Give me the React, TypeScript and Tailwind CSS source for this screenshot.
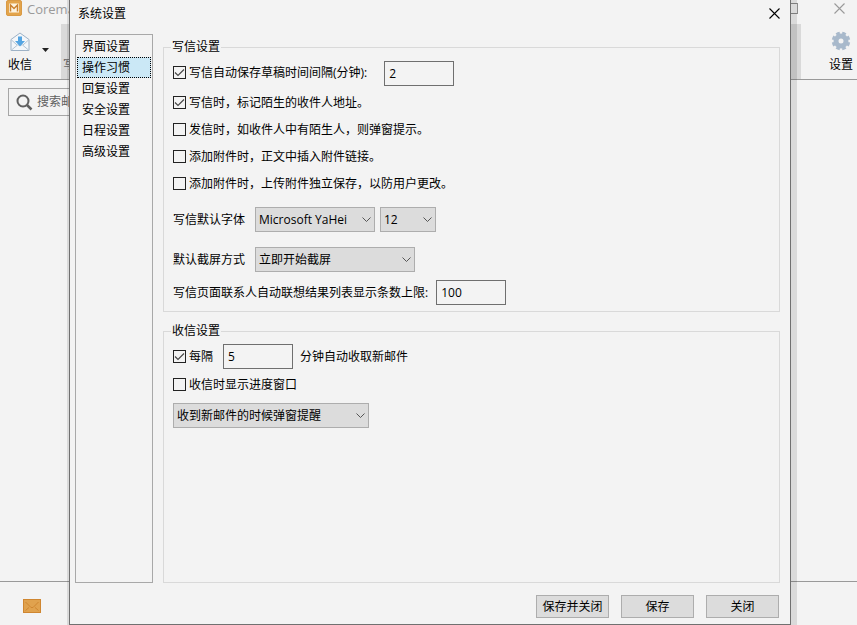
import { useState, type ReactNode } from "react";

const categories = ["界面设置", "操作习惯", "回复设置", "安全设置", "日程设置", "高级设置"];

function CloseIcon({ className }: { className: string }) {
  return (
    <svg viewBox="0 0 11 11" className={className} fill="none" stroke="currentColor" strokeWidth="1.1">
      <path d="M0.5 0.5 10.5 10.5M10.5 0.5 0.5 10.5" />
    </svg>
  );
}

function CheckOption({ label, checked = false }: { label: string; checked?: boolean }) {
  return (
    <label className="flex items-center gap-[3px]">
      <span className="relative flex size-[13px] shrink-0">
        <input
          type="checkbox"
          defaultChecked={checked}
          className="peer size-[13px] appearance-none border border-[#222222] bg-[#f3f3f3]"
        />
        <svg
          viewBox="0 0 13 13"
          className="pointer-events-none absolute inset-0 hidden peer-checked:block"
          fill="none"
          stroke="#444444"
          strokeWidth="1.1"
        >
          <path d="M2 6.5 5 9.5 11 3.5" />
        </svg>
      </span>
      <span>{label}</span>
    </label>
  );
}

function Dropdown({ id, label, width, options }: { id: string; label: string; width: string; options: string[] }) {
  return (
    <span className={`relative flex h-[25px] ${width}`}>
      <select
        id={id}
        aria-label={label}
        className="size-full appearance-none border border-[#adadad] bg-[#dcdcdc] pl-[3px] pr-4 text-black"
      >
        {options.map((o) => (
          <option key={o}>{o}</option>
        ))}
      </select>
      <svg
        viewBox="0 0 9 5"
        className="pointer-events-none absolute right-1 top-[10px] h-[5px] w-[9px]"
        fill="none"
        stroke="#555555"
      >
        <path d="M0.5 0.5 4.5 4.5 8.5 0.5" />
      </svg>
    </span>
  );
}

function NumberBox({ label, value }: { label: string; value: string }) {
  return (
    <input
      type="text"
      aria-label={label}
      defaultValue={value}
      className="h-[25px] w-[70px] border border-[#6f6f6f] bg-[#f3f3f3] px-1"
    />
  );
}

function Group({ title, className, children }: { title: string; className: string; children: ReactNode }) {
  return (
    <fieldset className={`min-w-0 border border-[#d9d9d9] pl-[9px] ${className}`}>
      <legend className="-ml-[2px] px-px leading-5">{title}</legend>
      {children}
    </fieldset>
  );
}

function MainWindow() {
  return (
    <div className="flex min-h-screen flex-col">
      <header className="border-b border-[#999999]">
        <div className="flex h-6 justify-between pl-[6px] pr-3 text-[#9a9a9a]">
          <div className="flex items-start gap-[5px]">
            <svg viewBox="0 0 16 16" className="size-4">
              <rect x="0.5" y="0.5" width="15" height="15" rx="1.5" fill="#e3a44b" stroke="#d99a45" />
              <rect x="3" y="3.5" width="10" height="9" fill="#fdf3e0" />
              <path d="M4.5 11.500V5L8 8.500 11.500 5V11.500" fill="none" stroke="#cb8230" strokeWidth="1.500" />
            </svg>
            <span className="text-[13px] leading-[18px]">Coremail</span>
          </div>
          <div className="flex gap-9 pt-[3px]">
            <span className="size-[11px] border border-[#8c8c8c]" />
            <button aria-label="关闭主窗口" className="flex h-[11px]">
              <CloseIcon className="size-[11px]" />
            </button>
          </div>
        </div>
        <div className="flex h-[55px] items-stretch justify-between">
          <div className="flex">
            <button className="flex w-10 flex-col items-center gap-[5px] pt-2">
              <svg viewBox="0 0 20 20" className="size-5" fill="none">
                <path d="M1 7.500 10 1 19 7.500V18.500H1Z" fill="#f4f7fa" stroke="#9eb2c6" />
                <path d="M1.500 8 7 13M18.500 8 13 13M1.500 18 7.500 13H12.500L18.500 18" stroke="#b4c3d2" />
                <path d="M8 4.500H12V9H15L10 14.500 5 9H8Z" fill="#55a5e2" />
              </svg>
              <span>收信</span>
            </button>
            <svg viewBox="0 0 7 4" className="ml-[2px] mt-6 h-1 w-[7px]">
              <path d="M0 0H7L3.500 4Z" fill="#222222" />
            </svg>
            <button
              aria-label="写信"
              className="ml-3 flex w-10 items-end bg-[#d9d9d9] pb-[6px] pl-[2px] text-[#666666]"
            >
              写
            </button>
          </div>
          <div className="flex">
            <span className="mr-[24px] w-[34px] bg-[#d9d9d9]" />
            <button className="flex w-8 flex-col items-center gap-[6px] pt-[7px]">
              <svg viewBox="0 0 20 20" className="size-5" fill="none">
                <circle cx="10" cy="10" r="5" stroke="#a8b9cb" strokeWidth="5" />
                <circle
                  cx="10"
                  cy="10"
                  r="8"
                  stroke="#a8b9cb"
                  strokeWidth="2.5"
                  pathLength="16"
                  strokeDasharray="1.200 0.800"
                  strokeDashoffset="1.600"
                />
              </svg>
              <span className="whitespace-nowrap">设置</span>
            </button>
          </div>
        </div>
      </header>
      <main className="flex-1 p-2">
        <label className="flex h-7 w-52 items-center gap-1 border border-[#a6a6a6] pl-[7px]">
          <svg viewBox="0 0 17 17" className="size-[17px] shrink-0" fill="none" stroke="#606060" strokeWidth="2">
            <circle cx="7" cy="7" r="5.500" />
            <path d="M11 11 15.500 15.500" strokeWidth="2.500" />
          </svg>
          <input
            type="search"
            aria-label="搜索邮件"
            placeholder="搜索邮件"
            className="w-full min-w-0 bg-transparent placeholder:text-[#606060]"
          />
        </label>
      </main>
      <footer className="flex h-11 items-center border-t border-[#999999] pl-[23px] pt-1">
        <svg viewBox="0 0 18 14" className="h-[14px] w-[18px]">
          <rect x="0.5" y="0.5" width="17" height="13" fill="#e0a24e" stroke="#cf8630" />
          <path d="M2.500 3 8 8.500H10L15.500 3M2.500 11.500 6 8.500M15.500 11.500 12 8.500" fill="none" stroke="#cf8630" />
        </svg>
      </footer>
    </div>
  );
}

export default function App() {
  const [active, setActive] = useState("操作习惯");

  return (
    <div className="relative min-h-screen overflow-hidden bg-[#f3f3f3] font-['Open_Sans','Noto_Sans_CJK_SC',sans-serif] text-xs text-black">
      <MainWindow />
      <div
        role="dialog"
        aria-labelledby="dialog-title"
        className="absolute inset-y-0 left-[69px] right-[66px] flex flex-col border-x border-b border-[#707070] bg-[#f3f3f3] shadow-[2px_0_0_4px_rgba(0,0,0,0.1)]"
      >
        <div className="flex h-[34px] shrink-0 items-start justify-between pl-2 pr-[10px]">
          <h1 id="dialog-title" className="pt-1 leading-5">
            系统设置
          </h1>
          <button aria-label="关闭窗口" className="pt-2">
            <CloseIcon className="size-[11px]" />
          </button>
        </div>
        <div className="flex min-h-0 flex-1 gap-[10px] pl-[5px] pr-[10px]">
          <nav className="w-[78px] shrink-0 border border-[#a8a8a8] p-px">
            {categories.map((c) => (
              <button
                key={c}
                onClick={() => setActive(c)}
                className={`flex h-[21px] w-full items-center border border-dotted pl-1 ${
                  c === active ? "border-black bg-[#cbe8f6]" : "border-transparent"
                }`}
              >
                {c}
              </button>
            ))}
          </nav>
          <div className="flex min-w-0 flex-1 flex-col gap-[9px] pt-[3px]">
            <Group title="写信设置" className="pb-[6px]">
              <div className="mt-1 flex gap-[17px]">
                <div className="flex h-[23px]">
                  <CheckOption label="写信自动保存草稿时间间隔(分钟):" checked />
                </div>
                <NumberBox label="自动保存间隔" value="2" />
              </div>
              <div className="mt-[3px] grid auto-rows-[27px] justify-start">
                <CheckOption label="写信时，标记陌生的收件人地址。" checked />
                <CheckOption label="发信时，如收件人中有陌生人，则弹窗提示。" />
                <CheckOption label="添加附件时，正文中插入附件链接。" />
                <CheckOption label="添加附件时，上传附件独立保存，以防用户更改。" />
              </div>
              <div className="mt-[10px] flex items-center">
                <label htmlFor="font-family" className="w-[82px]">
                  写信默认字体
                </label>
                <Dropdown id="font-family" label="写信默认字体" width="w-[120px]" options={["Microsoft YaHei"]} />
                <span className="w-[5px]" />
                <Dropdown id="font-size" label="字号" width="w-14" options={["12"]} />
              </div>
              <div className="mt-[15px] flex items-center">
                <label htmlFor="capture" className="w-[82px]">
                  默认截屏方式
                </label>
                <Dropdown id="capture" label="默认截屏方式" width="w-40" options={["立即开始截屏"]} />
              </div>
              <label className="mt-2 flex items-center gap-2">
                写信页面联系人自动联想结果列表显示条数上限:
                <NumberBox label="显示条数上限" value="100" />
              </label>
            </Group>
            <Group title="收信设置" className="flex-1">
              <div className="mt-[3px] flex h-[25px] items-center">
                <CheckOption label="每隔" checked />
                <span className="ml-[10px] mr-[7px] flex">
                  <NumberBox label="收取间隔" value="5" />
                </span>
                分钟自动收取新邮件
              </div>
              <div className="mt-[2px] grid auto-rows-[27px] justify-start">
                <CheckOption label="收信时显示进度窗口" />
              </div>
              <div className="mt-[5px] flex">
                <Dropdown id="notify" label="新邮件提醒" width="w-[196px]" options={["收到新邮件的时候弹窗提醒"]} />
              </div>
            </Group>
          </div>
        </div>
        <div className="flex shrink-0 justify-end gap-3 pb-[6px] pr-[11px] pt-3">
          {["保存并关闭", "保存", "关闭"].map((b) => (
            <button key={b} className="h-[23px] w-[73px] border border-[#adadad] bg-[#dcdcdc]">
              {b}
            </button>
          ))}
        </div>
      </div>
    </div>
  );
}
